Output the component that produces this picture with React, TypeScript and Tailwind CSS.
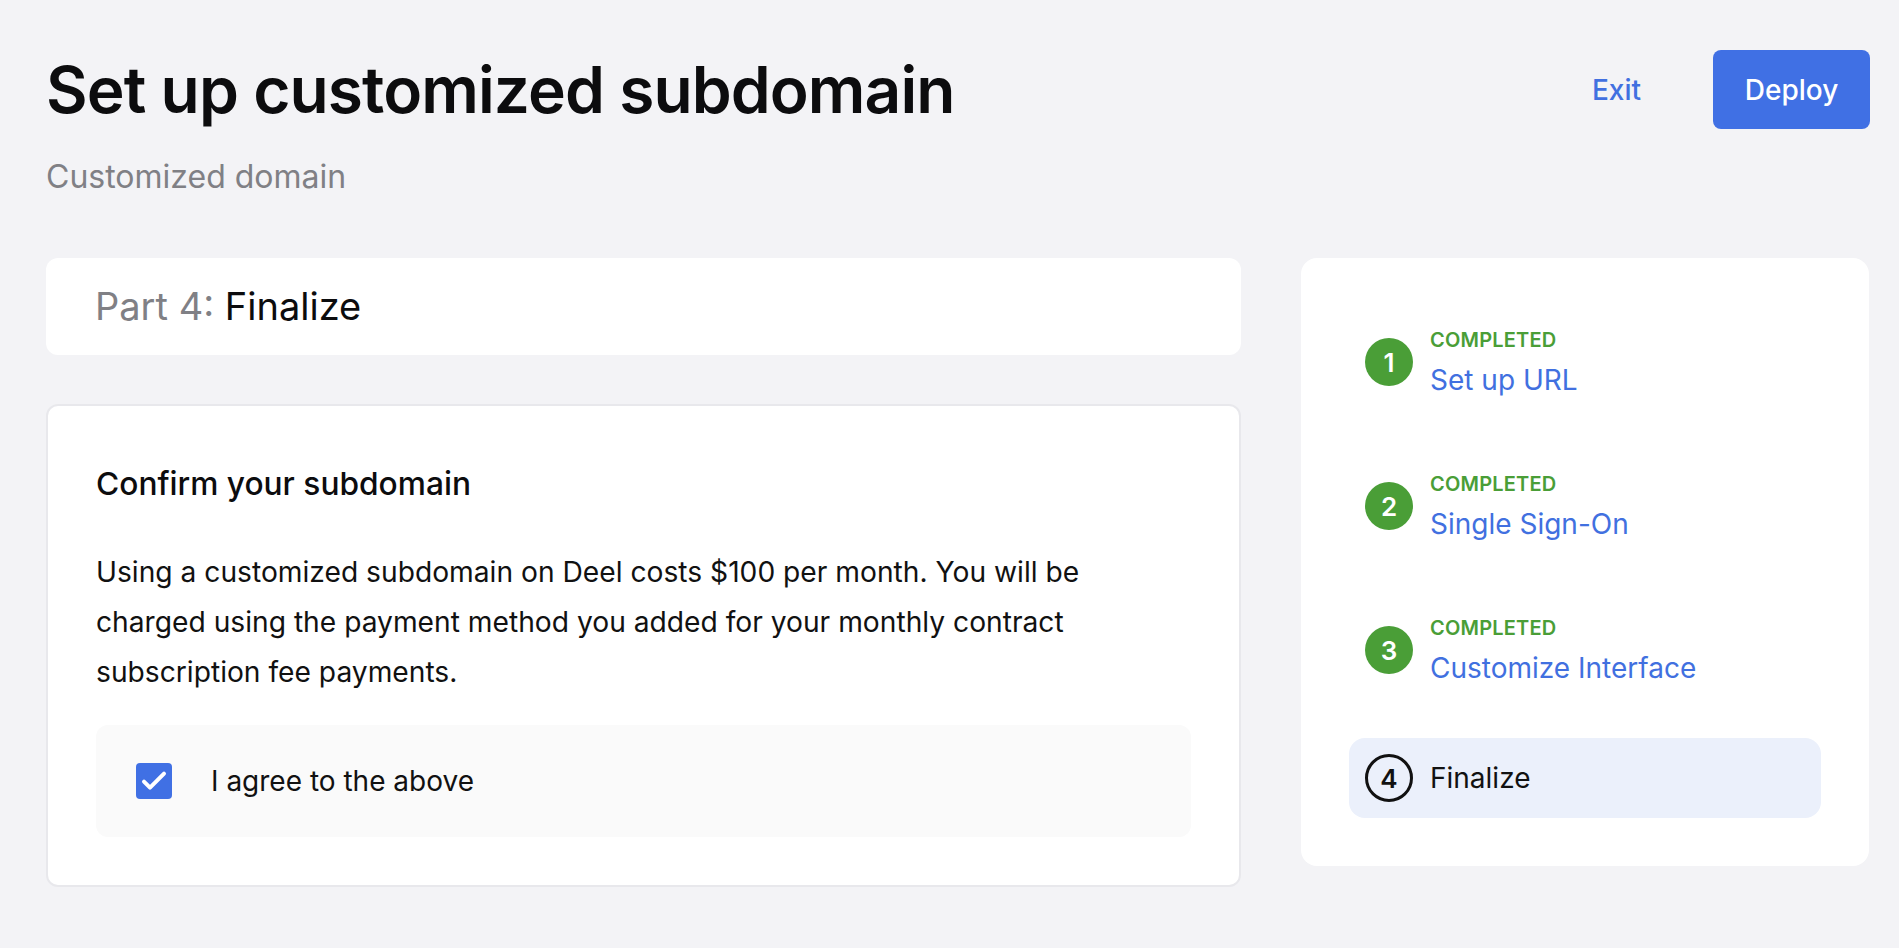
import React from 'react';

type Step = { n: number; title: string; done: boolean };

const steps: Step[] = [
  { n: 1, title: 'Set up URL', done: true },
  { n: 2, title: 'Single Sign-On', done: true },
  { n: 3, title: 'Customize Interface', done: true },
  { n: 4, title: 'Finalize', done: false },
];

function StepRow({ step }: { step: Step }) {
  if (!step.done) {
    return (
      <div className="flex h-[80px] items-center gap-[17px] rounded-[16px] bg-[#ebf0fb] px-[16px]">
        <div className="flex h-[48px] w-[48px] items-center justify-center rounded-full border-[3px] border-[#111] text-[26px] font-semibold text-[#111]">
          {step.n}
        </div>
        <span className="text-[28px] text-[#111]">{step.title}</span>
      </div>
    );
  }
  return (
    <div className="flex h-[112px] items-center gap-[17px] px-[16px]">
      <div className="flex h-[48px] w-[48px] items-center justify-center rounded-full bg-[#4a9e37] text-[26px] font-semibold text-white">
        {step.n}
      </div>
      <div className="flex flex-col">
        <span className="text-[20px] font-semibold leading-[24px] tracking-[0.2px] text-[#4a9e37]">COMPLETED</span>
        <span className="mt-[11px] text-[28px] leading-[34px] text-[#4170e0]">{step.title}</span>
      </div>
    </div>
  );
}

export default function App() {
  return (
    <div className="min-h-screen bg-[#f3f3f6] pl-[46px] pr-[29px] pt-[51px] font-['Inter',sans-serif] text-[#111]">
      {/* header */}
      <div className="flex items-start justify-between">
        <div>
          <h1 className="text-[64px] font-semibold leading-[77px] tracking-[-0.9px] text-[#0c0c0e]">
            Set up customized subdomain
          </h1>
          <p className="mt-[30px] text-[32px] leading-[38px] text-[#808085]">Customized domain</p>
        </div>
        <div className="flex h-[77px] items-center gap-[72px]">
          <button className="text-[28px] font-medium text-[#4170e0]">Exit</button>
          <button className="h-[79px] w-[157px] rounded-[8px] bg-[#4070e4] text-[28px] font-medium text-white">
            Deploy
          </button>
        </div>
      </div>

      <div className="mt-[62px] flex gap-[60px]">
        {/* main column */}
        <div className="flex w-[1195px] flex-col gap-[49px]">
          <div className="flex h-[97px] items-center rounded-[12px] bg-white px-[49px]">
            <span className="text-[38px] text-[#808085]">Part 4:&nbsp;</span>
            <span className="text-[38px] text-[#0c0c0e]">Finalize</span>
          </div>

          <div className="rounded-[12px] border-2 border-[#e8e8ec] bg-white px-[48px] pb-[48px] pt-[58px]">
            <h2 className="text-[31.7px] font-medium leading-[40px] text-[#0c0c0e]">Confirm your subdomain</h2>
            <p className="mt-[43px] max-w-[1050px] text-[28.2px] leading-[50px] text-[#111]">
              Using a customized subdomain on Deel costs $100 per month. You will be charged using the payment
              method you added for your monthly contract subscription fee payments.
            </p>
            <div className="mt-[28px] flex h-[112px] items-center gap-[39px] rounded-[12px] bg-[#fafafa] px-[40px]">
              <div className="flex h-[36px] w-[36px] items-center justify-center rounded-[4px] bg-[#4070e4]">
                <svg width="32" height="32" viewBox="0 0 24 24" fill="none">
                  <path d="M4.5 12.5l4.5 4.5L19.5 6.5" stroke="white" strokeWidth="3" strokeLinecap="round" strokeLinejoin="round" />
                </svg>
              </div>
              <span className="text-[28px] text-[#111]">I agree to the above</span>
            </div>
          </div>
        </div>

        {/* steps sidebar */}
        <div className="h-fit w-[568px] rounded-[16px] bg-white p-[48px]">
          <div className="flex flex-col gap-[32px]">
            {steps.map((s) => (
              <StepRow key={s.n} step={s} />
            ))}
          </div>
        </div>
      </div>
    </div>
  );
}
